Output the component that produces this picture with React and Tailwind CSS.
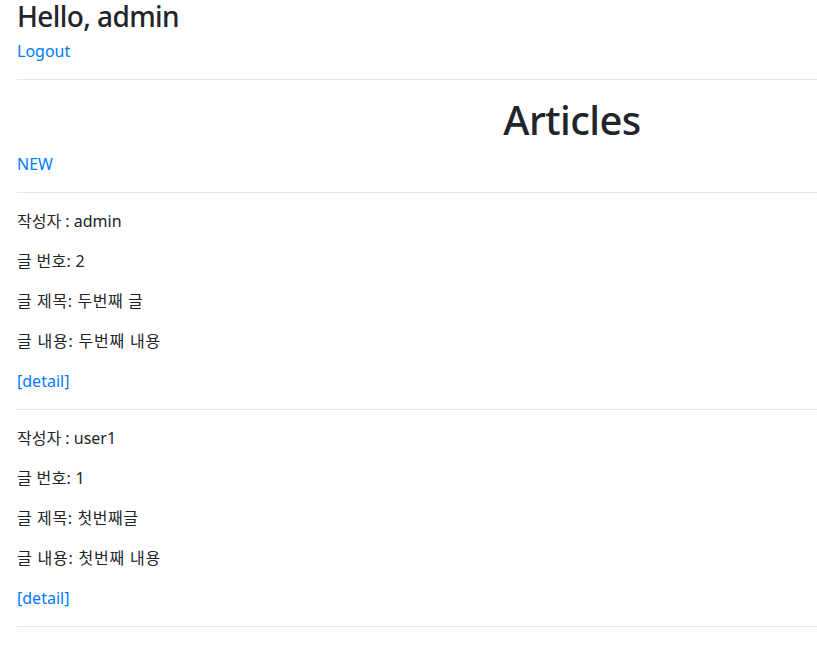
import React from 'react';

const articles = [
  { author: 'admin', id: 2, title: '두번째 글', content: '두번째 내용' },
  { author: 'user1', id: 1, title: '첫번째글', content: '첫번째 내용' },
];

const font = { fontFamily: '"Noto Sans", "Noto Sans CJK KR", sans-serif' };

const App = () => {
  return (
    <div className="w-[817px] overflow-hidden bg-white text-[#212529] text-base leading-6" style={font}>
      <div className="w-[1110px] ml-[17px]">
        <h3 className="text-[28px] leading-[1.2] font-medium tracking-[-0.6px] mb-[5px]">Hello, admin</h3>
        <p className="mb-4">
          <a href="#" className="text-[#007bff]">Logout</a>
        </p>
        <hr className="border-t border-black/10 my-4" />
        <h1 className="text-[40px] leading-[1.2] font-medium tracking-[-0.6px] mb-2 text-center">Articles</h1>
        <p className="mb-4">
          <a href="#" className="text-[#007bff]">NEW</a>
        </p>
        <hr className="border-t border-black/10 my-4" />
        {articles.map((a) => (
          <div key={a.id}>
            <p className="mb-4">작성자 : {a.author}</p>
            <p className="mb-4 tracking-[0.3px]">글 번호: {a.id}</p>
            <p className="mb-4 tracking-[0.6px]">글 제목: {a.title}</p>
            <p className="mb-4 tracking-[0.8px]">글 내용: {a.content}</p>
            <p className="mb-4">
              <a href="#" className="text-[#007bff]">[detail]</a>
            </p>
            <hr className="border-t border-black/10 my-4" />
          </div>
        ))}
      </div>
    </div>
  );
};

export default App;
